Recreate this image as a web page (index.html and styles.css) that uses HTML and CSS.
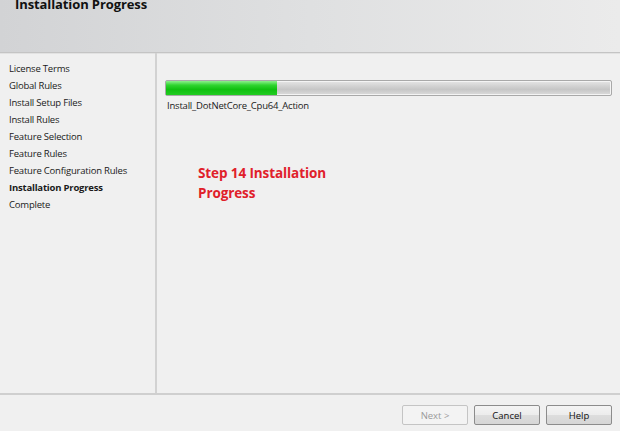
FILE: index.html
```html
<!DOCTYPE html>
<html>
<head>
<meta charset="utf-8">
<link rel="stylesheet" href="styles.css">
</head>
<body>
<div class="window">
  <div class="header">
    <div class="title">Installation Progress</div>
  </div>
  <div class="main">
    <div class="sidebar">
      <div class="step">License Terms</div>
      <div class="step">Global Rules</div>
      <div class="step">Install Setup Files</div>
      <div class="step">Install Rules</div>
      <div class="step">Feature Selection</div>
      <div class="step">Feature Rules</div>
      <div class="step">Feature Configuration Rules</div>
      <div class="step current">Installation Progress</div>
      <div class="step">Complete</div>
    </div>
    <div class="content">
      <div class="progress"><div class="fill" style="width:25%"></div></div>
      <div class="action">Install_DotNetCore_Cpu64_Action</div>
      <div class="note">Step 14 Installation<br>Progress</div>
    </div>
  </div>
  <div class="footer">
    <button class="btn disabled">Next &gt;</button>
    <button class="btn">Cancel</button>
    <button class="btn">Help</button>
  </div>
</div>
</body>
</html>
```
FILE: styles.css
```css
html, body {
  margin: 0;
  padding: 0;
  background: #f0f0f0;
}
.window {
  width: 620px;
  height: 431px;
  display: flex;
  flex-direction: column;
  font-family: "Open Sans", "Noto Sans", sans-serif;
  font-size: 9.5px;
  letter-spacing: -0.2px;
  color: #1a1a1a;
  overflow: hidden;
}
.header {
  height: 52px;
  flex: none;
  background: linear-gradient(to right, #d2d3d5 0%, #dfe0e1 50%, #ebebeb 100%);
  border-bottom: 1px solid #c4c4c4;
  box-shadow: 0 1px 0 #e2e2e2;
}
.title {
  font-weight: bold;
  font-size: 13px;
  line-height: 13px;
  letter-spacing: -0.1px;
  margin-top: -2px;
  padding-left: 15px;
  color: #111;
}
.main {
  flex: 1;
  display: flex;
  border-bottom: 2px solid #cfcfcf;
}
.sidebar {
  width: 157px;
  flex: none;
  border-right: 2px solid #d2d2d2;
  padding-top: 7px;
  padding-left: 9px;
  box-sizing: border-box;
}
.step {
  height: 17px;
  line-height: 17px;
  white-space: nowrap;
}
.step.current {
  font-weight: bold;
}
.content {
  flex: 1;
  padding: 27px 8px 0 8px;
}
.progress {
  height: 14px;
  border: 1px solid #a9a9a9;
  border-radius: 2px;
  background: linear-gradient(to bottom, #e6e6e6 0%, #d0d0d0 40%, #c6c6c6 60%, #dcdcdc 100%);
  box-shadow: inset 0 0 0 1px #f4f4f4;
}
.fill {
  height: 100%;
  background: linear-gradient(to bottom, #8ef08e 0%, #2fd42f 30%, #10c010 60%, #22cc22 100%);
}
.action {
  margin-top: 3px;
  padding-left: 2px;
  line-height: 14px;
}
.note {
  margin-top: 50px;
  margin-left: 33px;
  color: #e0202a;
  font-weight: bold;
  font-size: 13.5px;
  letter-spacing: -0.1px;
  line-height: 20px;
}
.footer {
  height: 36px;
  flex: none;
  display: flex;
  justify-content: flex-end;
  align-items: flex-start;
  gap: 6px;
  padding: 10px 8px 0 0;
  box-sizing: border-box;
}
.btn {
  width: 66px;
  height: 20px;
  margin: 0;
  padding: 0;
  font-family: "Open Sans", "Noto Sans", sans-serif;
  font-size: 9.5px;
  color: #111;
  border: 1px solid #8c8c8c;
  border-radius: 2px;
  background: linear-gradient(to bottom, #f4f4f4 0%, #ececec 50%, #dddddd 51%, #d6d6d6 100%);
}
.btn.disabled {
  color: #9a9a9a;
  border-color: #c4c4c4;
  background: #f3f3f3;
}
```
